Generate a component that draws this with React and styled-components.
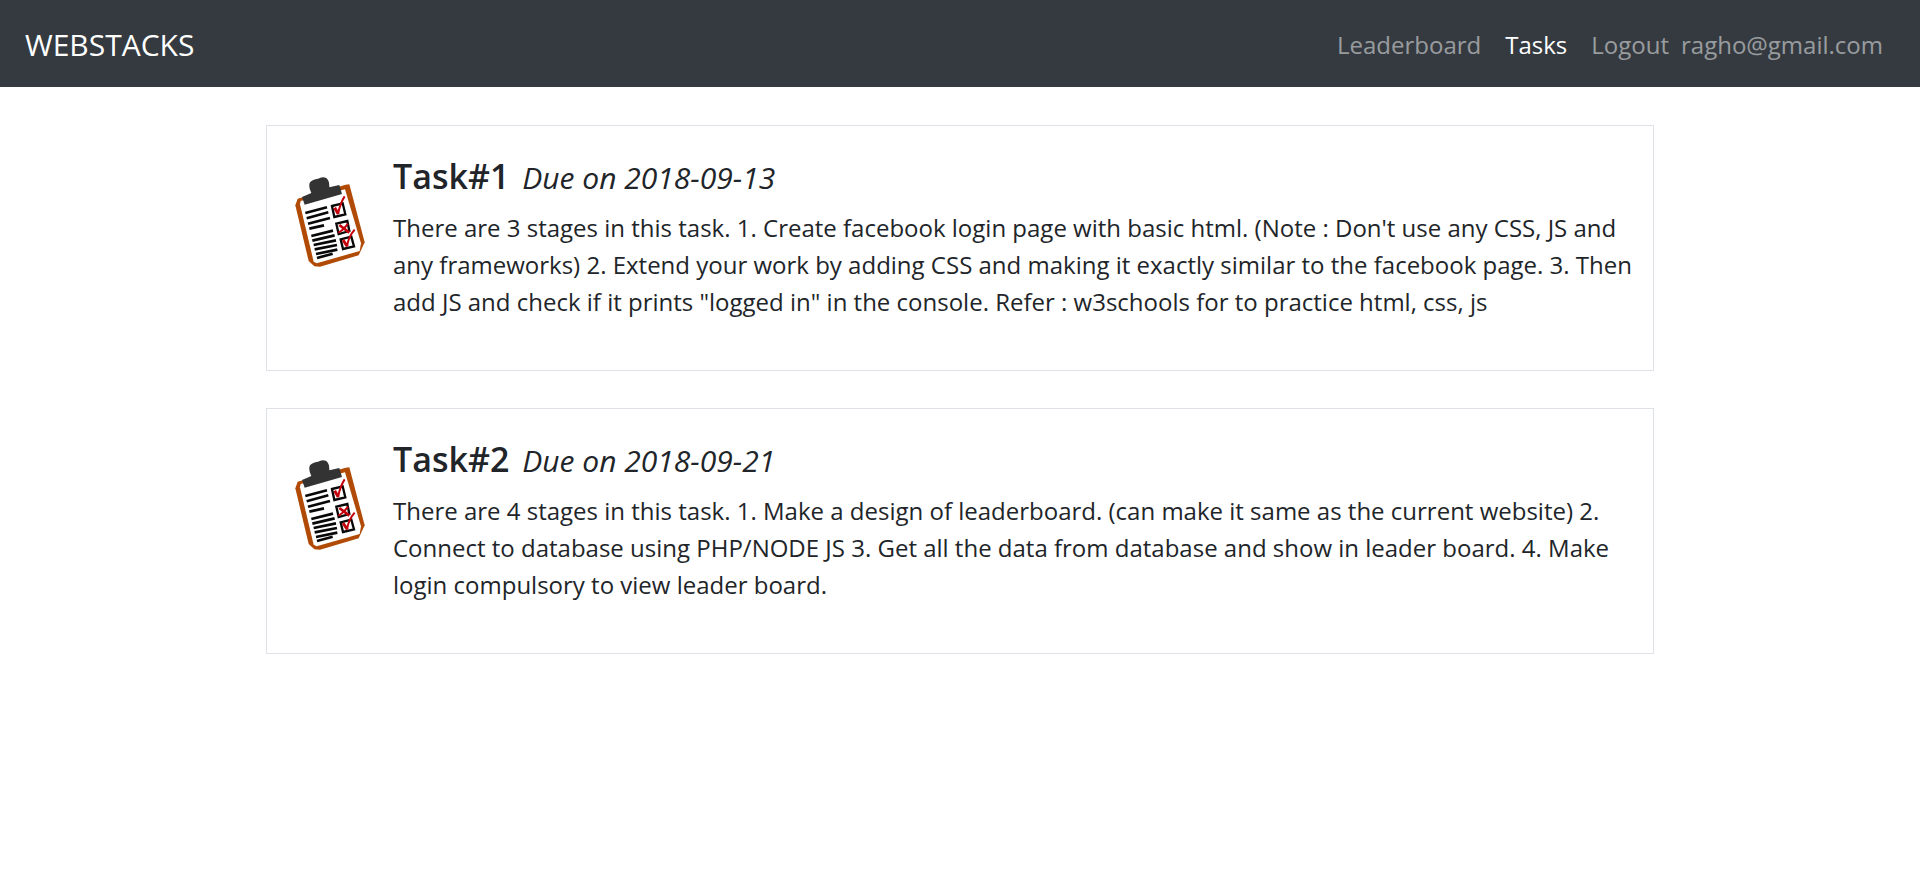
import React from "react";
import styled, { createGlobalStyle } from "styled-components";

const GlobalStyle = createGlobalStyle`
  * { box-sizing: border-box; }
  body {
    margin: 0;
    background: #fff;
    color: #212529;
    font-family: "Segoe UI", "Open Sans", "Noto Sans", sans-serif;
    font-size: 24px;
    line-height: 37px;
  }
`;

const Navbar = styled.nav`
  display: flex;
  flex-wrap: wrap;
  align-items: center;
  justify-content: space-between;
  min-height: 87px;
  padding: 14px 25px 12px;
  background: #343a40;
`;

const Brand = styled.a`
  color: #fff;
  font-size: 30px;
  line-height: 46px;
  text-decoration: none;
`;

const NavList = styled.ul`
  display: flex;
  flex-wrap: wrap;
  margin: 0;
  padding: 0;
  list-style: none;
`;

const NavLink = styled.a`
  display: block;
  padding: 12px;
  color: ${({ $active }) => ($active ? "#fff" : "rgba(255, 255, 255, 0.5)")};
  text-decoration: none;
`;

const LogoutItem = styled.li`
  display: flex;
`;

const Account = styled.span`
  padding: 12px 12px 12px 0;
  color: rgba(255, 255, 255, 0.5);
`;

const TaskList = styled.main`
  display: flex;
  flex-direction: column;
  gap: 37px;
  max-width: 1388px;
  margin: 38px auto;
`;

const Card = styled.article`
  display: flex;
  align-items: flex-start;
  gap: 28px;
  padding: 28px 20px 28px 28px;
  border: 1px solid #dee2e6;
`;

const TaskIcon = styled.svg`
  flex: none;
  width: 70px;
  height: 90px;
  margin-top: 23px;
`;

const TaskBody = styled.div`
  flex: 1;
  min-width: 0;
`;

const TaskTitle = styled.h4`
  margin: 0 0 9px;
  font-size: 34px;
  font-weight: 600;
  line-height: 44px;
`;

const DueDate = styled.i`
  margin-left: 4px;
  font-size: 30px;
  font-weight: 400;
`;

const Description = styled.p`
  margin: 0 0 22px;
`;

function Clipboard() {
  return (
    <TaskIcon viewBox="45 36 210 270" aria-hidden="true">
      <path
        d="M53 101 L197 59 L208 58 L254 232 L236 271 L120 305 L103 304 L86 288 L46 121 Z"
        fill="#b04a04"
      />
      <path d="M62 108 L195 73 L243 235 L239 258 L110 295 L101 290 L60 118 Z" fill="#fff" />
      <path
        d="M66 96 L94 84 Q84 64 90 52 Q98 43 114 41 Q127 33 139 39 Q149 47 148 67 L178 60 L186 87 L74 119 Z"
        fill="#333"
      />
      <g stroke="#080808" strokeWidth="8" fill="none">
        <path d="M76 144 L141 127 M80 160 L145 142 M84 176 L150 159 M88 191 L132 181" />
        <path d="M94 213 L159 197 M97 227 L164 211 M101 240 L168 226 M104 253 L171 240 M108 267 L172 254 M111 279 L158 266" />
      </g>
      <g stroke="#080808" strokeWidth="7" fill="none">
        <path d="M156 123 L188 115 L196 148 L163 156 Z" />
        <path d="M169 176 L202 168 L208 198 L176 207 Z" />
        <path d="M182 223 L214 215 L222 244 L189 252 Z" />
      </g>
      <g fill="none" stroke="#c4000b">
        <path d="M164 128 L175 147" strokeWidth="9" />
        <path d="M174 147 Q181 113 194 94" strokeWidth="6" />
        <path d="M178 180 L208 203" strokeWidth="8" />
        <path d="M175 203 Q188 197 204 176" strokeWidth="6" />
        <path d="M189 225 L202 244" strokeWidth="9" />
        <path d="M201 244 Q206 214 224 194" strokeWidth="6" />
      </g>
    </TaskIcon>
  );
}

const tasks = [
  {
    title: "Task#1",
    due: "2018-09-13",
    text: `There are 3 stages in this task. 1. Create facebook login page with basic html. (Note : Don't use any CSS, JS and any frameworks) 2. Extend your work by adding CSS and making it exactly similar to the facebook page. 3. Then add JS and check if it prints "logged in" in the console. Refer : w3schools for to practice html, css, js`,
  },
  {
    title: "Task#2",
    due: "2018-09-21",
    text: "There are 4 stages in this task. 1. Make a design of leaderboard. (can make it same as the current website) 2. Connect to database using PHP/NODE JS 3. Get all the data from database and show in leader board. 4. Make login compulsory to view leader board.",
  },
];

export default function App() {
  return (
    <>
      <GlobalStyle />
      <Navbar>
        <Brand href="#">WEBSTACKS</Brand>
        <NavList>
          <li><NavLink href="#leaderboard">Leaderboard</NavLink></li>
          <li><NavLink href="#tasks" $active aria-current="page">Tasks</NavLink></li>
          <LogoutItem>
            <NavLink href="#logout">Logout</NavLink>
            <Account>ragho@gmail.com</Account>
          </LogoutItem>
        </NavList>
      </Navbar>
      <TaskList>
        {tasks.map((task) => (
          <Card key={task.title}>
            <Clipboard />
            <TaskBody>
              <TaskTitle>
                {task.title} <DueDate>Due on {task.due}</DueDate>
              </TaskTitle>
              <Description>{task.text}</Description>
            </TaskBody>
          </Card>
        ))}
      </TaskList>
    </>
  );
}
